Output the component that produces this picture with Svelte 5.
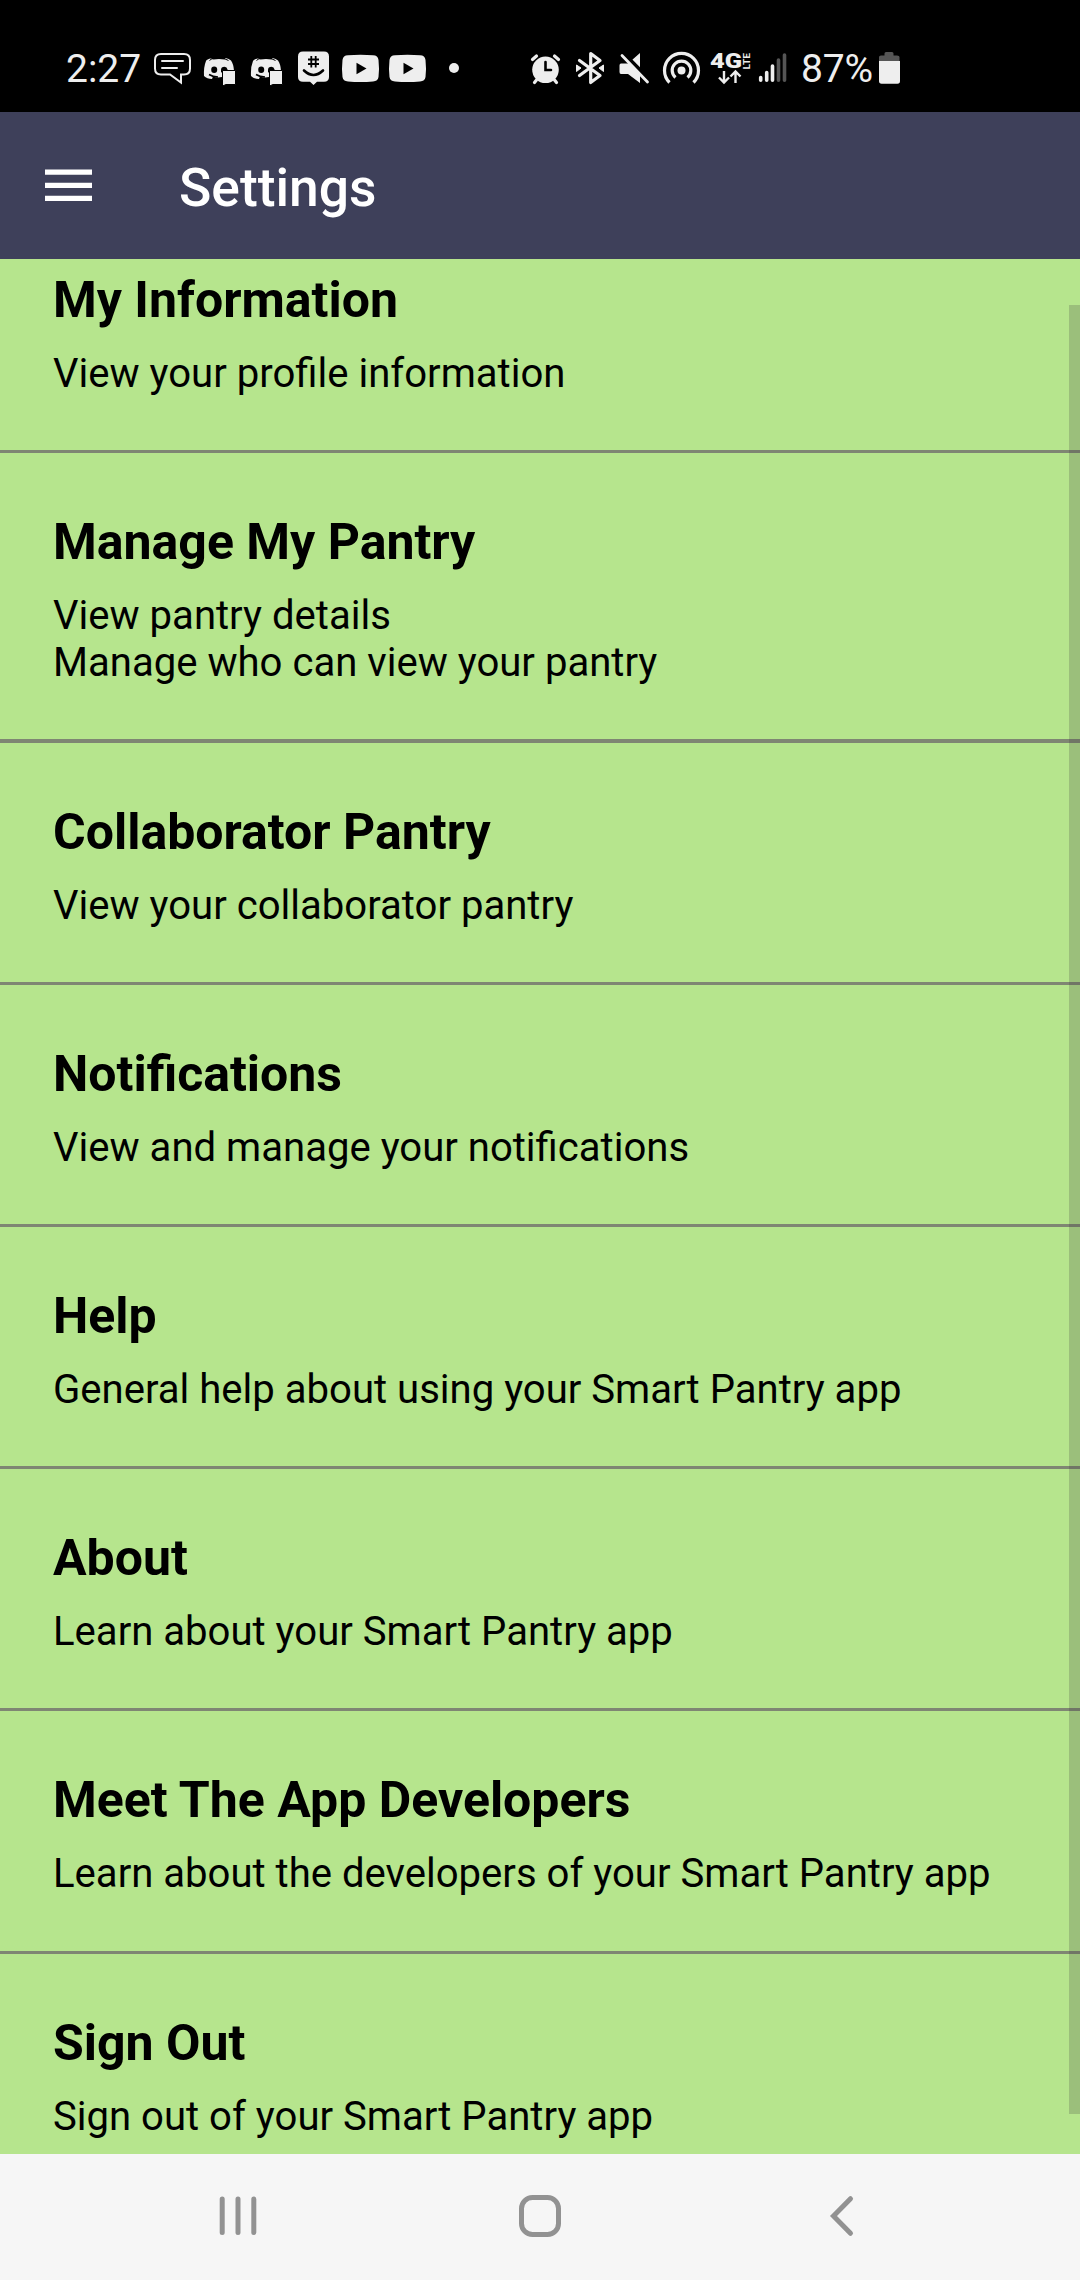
<script>
  const items = [
    { title: 'My Information', lines: ['View your profile information'] },
    { title: 'Manage My Pantry', lines: ['View pantry details', 'Manage who can view your pantry'], thick: true },
    { title: 'Collaborator Pantry', lines: ['View your collaborator pantry'] },
    { title: 'Notifications', lines: ['View and manage your notifications'] },
    { title: 'Help', lines: ['General help about using your Smart Pantry app'] },
    { title: 'About', lines: ['Learn about your Smart Pantry app'] },
    { title: 'Meet The App Developers', lines: ['Learn about the developers of your Smart Pantry app'] },
    { title: 'Sign Out', lines: ['Sign out of your Smart Pantry app'] },
  ];
</script>

{#snippet discord()}
  <svg width="47" height="40" viewBox="0 0 47 40">
    <path fill="#eee" d="M13 10.500Q9 11 8 13Q5.500 19 6 28Q9 31 14 31L15 28.500Q19 30 24 29V22.500H36Q35.500 16 33 12.500Q31 10.500 27.500 10L26.500 11.500Q21 10.500 15.500 11.500Z" />
    <path d="M11.500 12.500Q13 11 15 10.500M26 10.500L30.500 12.500" stroke="#000" stroke-width="1" fill="none" />
    <ellipse cx="16.200" cy="21.800" rx="3" ry="3.200" fill="#000" />
    <path d="M23 24.500V22Q23 18.700 26.500 18.700Q29 19 29.500 21.500V23Z" fill="#000" />
    <path d="M11 26.500Q15 29 20 29" stroke="#000" stroke-width="1.500" fill="none" />
    <path fill="#eee" stroke="#000" stroke-width="1" d="M24.500 22.500H37.500V36.500H28L24.500 38Z" />
  </svg>
{/snippet}

{#snippet youtube()}
  <svg width="47" height="40" viewBox="0 0 47 40">
    <path fill="#eee" d="M12 7.300Q24.500 6.300 37 7.300Q42 7.500 42.500 12Q43.500 20.500 42.500 29Q42 33.200 37 33.500Q24.500 34.500 12 33.500Q7 33.200 6.500 29Q5.500 20.500 6.500 12Q7 7.500 12 7.300Z" />
    <path d="M20.500 14.800V26.200L30.500 20.500Z" fill="#000" />
  </svg>
{/snippet}

<div class="screen">
  <div class="status">
    <span class="time">2:27</span>
    <svg width="48" height="40" viewBox="0 0 48 40" fill="none" stroke="#eee" stroke-width="2">
      <path d="M11 6H34Q40 6 40 12V20.500Q40 26.500 34 26.500H31V34.500L20 26.500H11Q5 26.500 5 20.500V12Q5 6 11 6Z" />
      <path d="M12 13H33M12 20H27" stroke-linecap="round" />
    </svg>
    {@render discord()}
    {@render discord()}
    <svg width="44" height="40" viewBox="0 0 44 40">
      <path fill="#eee" d="M11 3.500H32Q37 3.500 37 8.500V29Q37 33.700 32 33.700H25L21.500 37L18 33.700H11Q6 33.700 6 29V8.500Q6 3.500 11 3.500Z" />
      <path d="M19.300 8V19.500M23.700 8V19.500M16 11.500H27M16 16H27" stroke="#000" stroke-width="1.800" fill="none" />
      <path d="M12 22.500Q21.500 31.500 31 22.500" stroke="#000" stroke-width="2.600" stroke-linecap="round" fill="none" />
    </svg>
    {@render youtube()}
    {@render youtube()}
    <svg width="90" height="40" viewBox="0 0 90 40"><circle cx="24" cy="20" r="5" fill="#eee" /></svg>
    <svg width="50" height="40" viewBox="0 0 50 40" fill="none" stroke="#eee" stroke-linecap="round">
      <circle cx="25.500" cy="21.800" r="13.300" fill="#eee" stroke="none" />
      <path d="M12.500 11.500L16.500 8M38.500 11.500L34.500 8M16.500 32L14.500 34.500M34.500 32L36.500 34.500" stroke-width="3.200" />
      <path d="M25.500 14V22H31" stroke="#000" stroke-width="2.600" />
    </svg>
    <svg width="43" height="40" viewBox="0 0 43 40">
      <path d="M9.500 12.500L30 27.500L20.700 34.500V5.500L30 12.500L9.500 27.500" fill="none" stroke="#eee" stroke-width="3.200" stroke-linecap="round" stroke-linejoin="round" />
      <path d="M6.500 17L11 20L6.500 23.500ZM33.500 17L29 20L33.500 23.500Z" fill="#eee" stroke="#eee" stroke-linejoin="round" />
    </svg>
    <svg width="43" height="40" viewBox="0 0 43 40">
      <path fill="#eee" d="M8 15.500H15L27 5V35L15 26H8Q6.500 26 6.500 24V17.500Q6.500 15.500 8 15.500Z" />
      <path d="M6 1.500L37 33" stroke="#000" stroke-width="5" />
      <path d="M9 7.500L34.500 34" stroke="#eee" stroke-width="2.800" stroke-linecap="round" />
    </svg>
    <svg width="49" height="40" viewBox="0 0 49 40" fill="none" stroke="#eee" stroke-width="3.200">
      <circle cx="25.500" cy="22.500" r="4" fill="#eee" stroke="none" />
      <path d="M19.500 29.500A9.300 9.300 0 1 1 31.500 29.500" />
      <path d="M13.500 34.500A17 17 0 1 1 37.500 34.500" />
    </svg>
    <svg width="51" height="40" viewBox="0 0 51 40" fill="none">
      <text x="5" y="20" textLength="32" lengthAdjust="spacingAndGlyphs" class="network">4G</text>
      <text transform="translate(44.500 21.500) rotate(-90)" textLength="16.500" lengthAdjust="spacingAndGlyphs" class="lte">LTE</text>
      <path d="M19 23V34M14 29.500L19 34.500L24 29.500M30.500 35V24M25.500 28.500L30.500 23.500L35.500 28.500" stroke="#eee" stroke-width="2.400" />
    </svg>
    <svg width="45" height="40" viewBox="0 0 45 40" stroke="#eee" stroke-width="3.600" stroke-linecap="round">
      <path d="M4.700 29.500V32.200M10.700 24.500V32.200M16.500 18V32.200" />
      <path d="M22.500 12V32.200M28.500 7V32.200" stroke="#555" />
    </svg>
    <span class="percent">87%</span>
    <svg width="30" height="40" viewBox="0 0 30 40">
      <path d="M7 13V9Q7 7.500 9 7.500H12.500V5.500Q12.500 4 14 4H20Q21.500 4 21.500 5.500V7.500H25Q27.500 7.500 27.500 9V13Z" fill="#555" />
      <path d="M7 13H28V33Q28 35.700 25.500 35.700H9.500Q7 35.700 7 33Z" fill="#eee" />
    </svg>
  </div>

  <header>
    <svg width="47" height="33" viewBox="0 0 47 33" class="menu"><path d="M0 3.200H47M0 16.300H47M0 29.400H47" stroke="#fff" stroke-width="5.200" /></svg>
    <h1>Settings</h1>
  </header>

  <main>
    <div class="list">
      {#each items as item}
        <section class:thick={item.thick}>
          <h2>{item.title}</h2>
          {#each item.lines as line}<p>{line}</p>{/each}
        </section>
      {/each}
    </div>
    <div class="scrollbar"></div>
  </main>

  <nav>
    <svg width="40" height="42" viewBox="0 0 40 42" stroke="#929292" stroke-width="5" stroke-linecap="round"><path d="M4.200 4V37.500M20 4V37.500M35.800 4V37.500" /></svg>
    <svg width="42" height="42" viewBox="0 0 42 42"><rect x="2.500" y="2.500" width="37" height="37" rx="11" fill="none" stroke="#929292" stroke-width="5" /></svg>
    <svg width="26" height="42" viewBox="0 0 26 42" fill="none" stroke="#929292" stroke-width="5" stroke-linecap="round"><path d="M21.500 3.700L4.500 21L21.500 38.300" /></svg>
  </nav>
</div>

<style>
  :global(body) { margin: 0; }
  .screen {
    width: 1080px;
    height: 2280px;
    display: flex;
    flex-direction: column;
    overflow: hidden;
    font-family: Roboto, sans-serif;
    background: #b6e58d;
  }
  svg { display: block; flex: none; }
  .status {
    box-sizing: border-box;
    height: 112px;
    flex: none;
    display: flex;
    align-items: center;
    padding: 24px 0 0 66px;
    background: #000;
    color: #eee;
    font-size: 39px;
    line-height: 40px;
    white-space: nowrap;
  }
  .time { width: 84px; flex: none; padding-top: 2px; }
  .percent { width: 71px; flex: none; padding-top: 2px; letter-spacing: -0.2px; }
  .network { font: 900 21px Roboto, sans-serif; fill: #eee; }
  .lte { font: 700 9.5px Roboto, sans-serif; fill: #eee; }
  header {
    height: 147px;
    flex: none;
    display: flex;
    align-items: center;
    background: #3e405a;
    color: #fff;
  }
  .menu { margin: 0 87px 0 45px; }
  h1 { margin: 4px 0 0; font-size: 53.4px; line-height: 64px; font-weight: 500; }
  main {
    height: 1895px;
    flex: none;
    position: relative;
    overflow: hidden;
  }
  .list { display: flex; flex-direction: column; margin-top: -47.9px; }
  section {
    box-sizing: border-box;
    flex: none;
    padding: 57px 53px 53.07px;
    border-bottom: 3px solid #7f8673;
  }
  .thick { border-bottom-width: 4px; }
  h2 { margin: 0 0 18px; font-size: 50px; line-height: 64px; font-weight: 700; }
  p { margin: 0; font-size: 40.08px; line-height: 47px; white-space: nowrap; }
  .scrollbar {
    position: absolute;
    top: 46px;
    right: 0;
    width: 11px;
    height: 1809px;
    background: rgba(60, 60, 60, 0.22);
  }
  nav {
    box-sizing: border-box;
    height: 126px;
    flex: none;
    display: flex;
    align-items: center;
    padding: 0 0 2px 218px;
    background: #f6f6f6;
  }
  nav svg:nth-child(2) { margin: 0 268px 0 261px; }
</style>
